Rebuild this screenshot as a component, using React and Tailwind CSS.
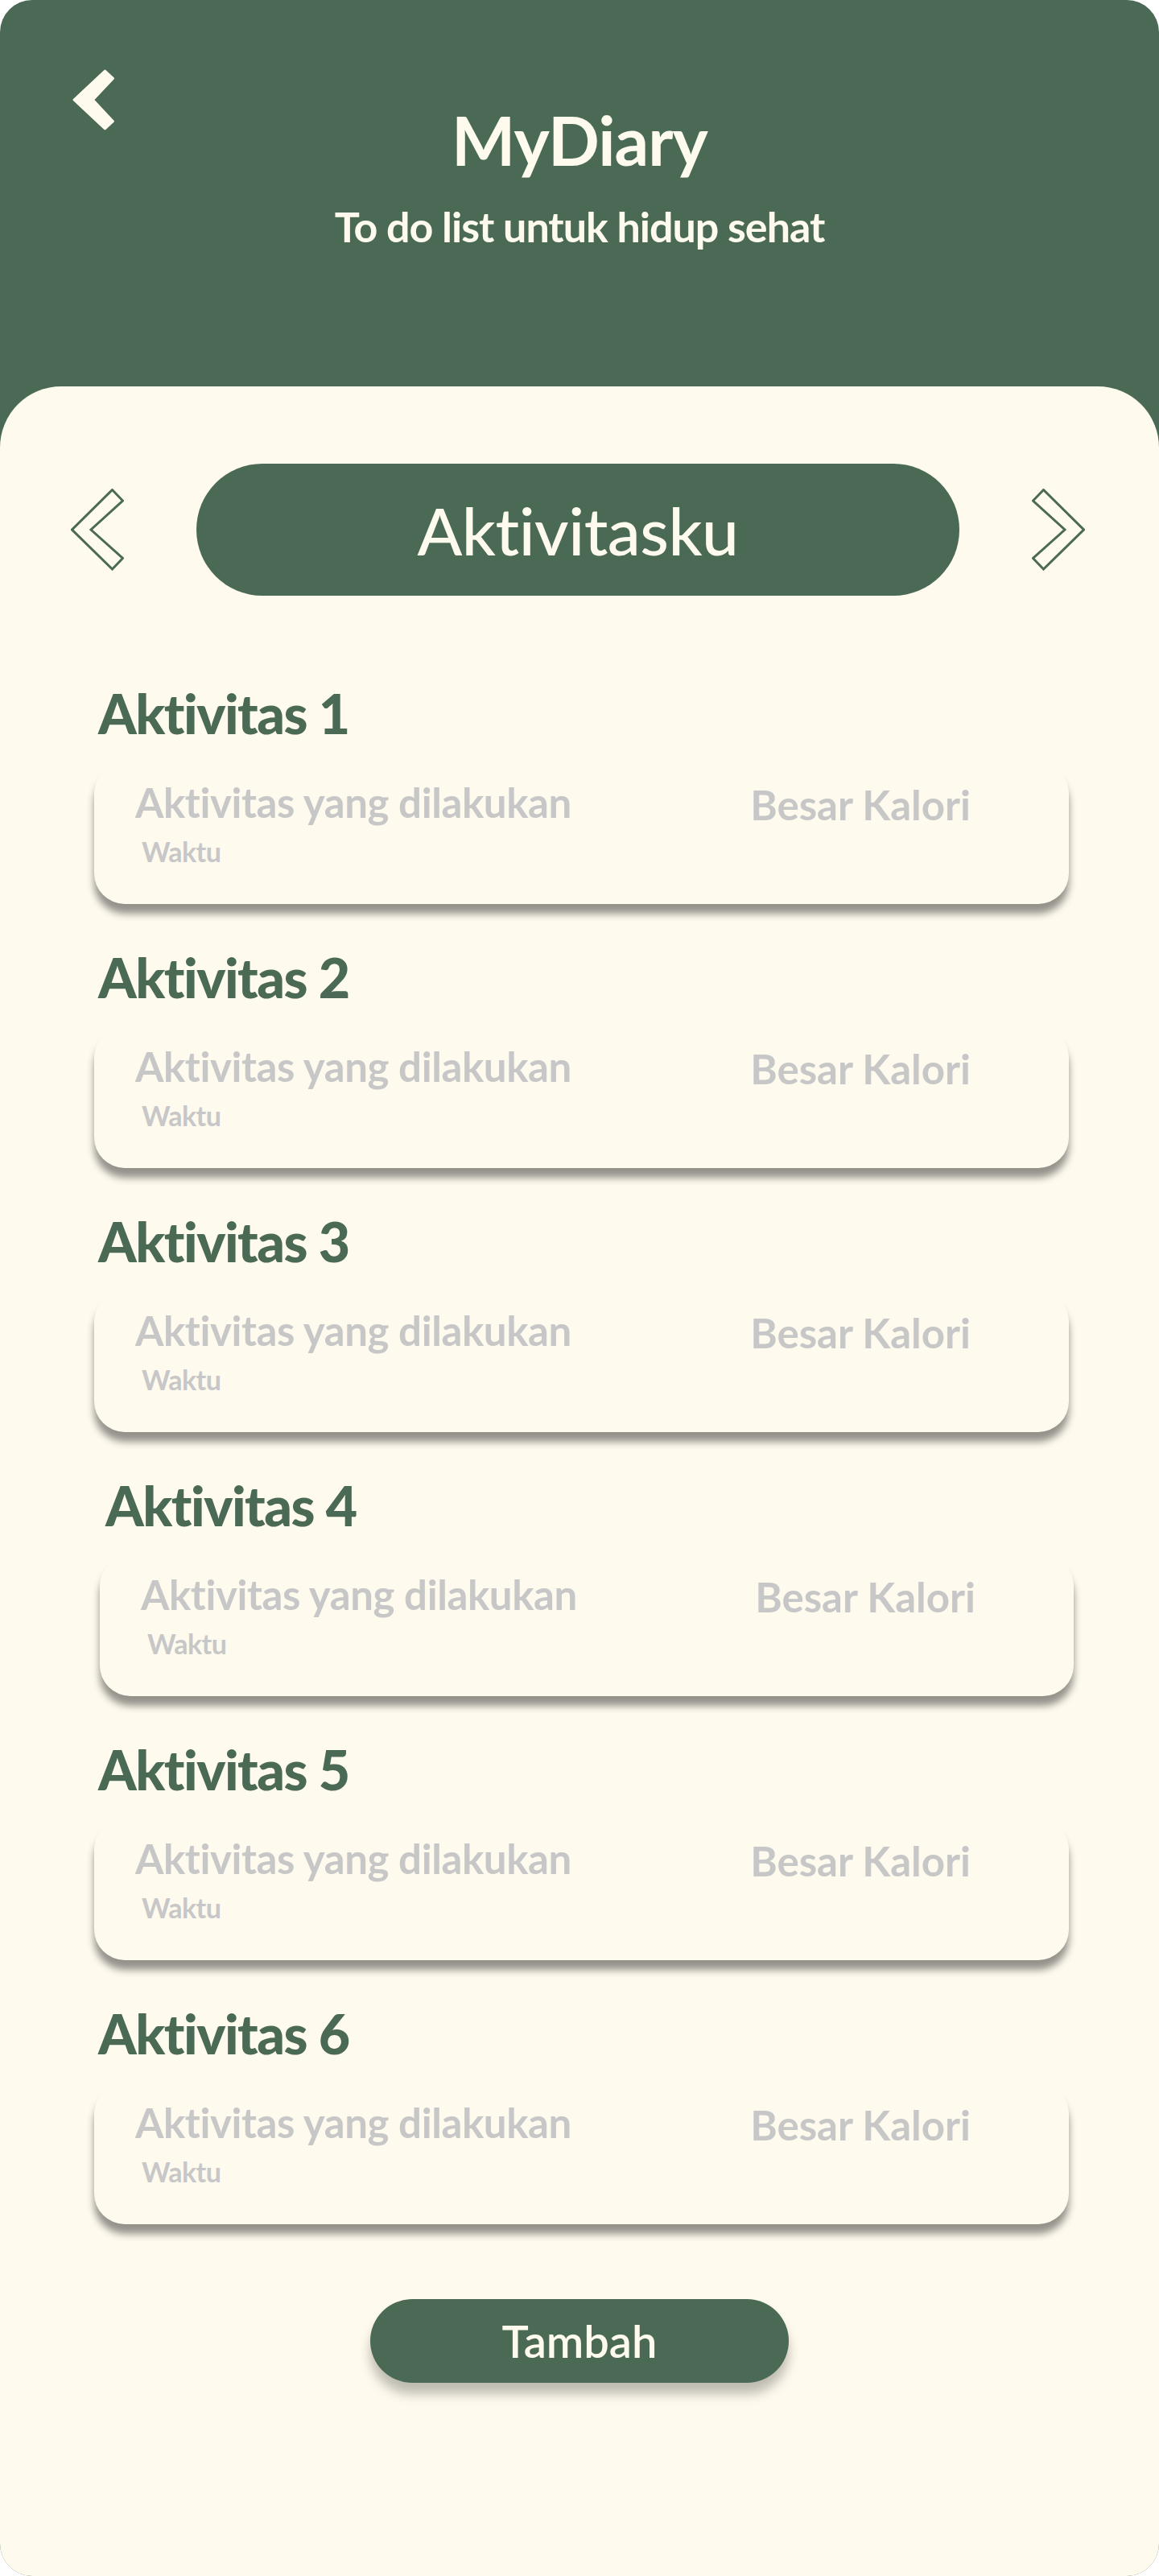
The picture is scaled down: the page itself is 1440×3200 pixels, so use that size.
import React from "react";

const font = { fontFamily: "Lato, 'Noto Sans', sans-serif" };

function BackIcon() {
  return (
    <svg width="52" height="76" viewBox="0 0 52 76" className="block">
      <polygon
        points="38.4,0 48.4,9.4 23.4,36 48.4,62.7 38.4,72 0,36"
        fill="#fefaee"
        stroke="#fefaee"
        strokeWidth="3"
        strokeLinejoin="round"
        transform="translate(2,2)"
      />
    </svg>
  );
}

function OutlineChevron({ right = false }) {
  return (
    <svg width="66" height="102" viewBox="0 0 66 102" className="block shrink-0">
      <g transform={right ? "translate(66,0) scale(-1,1)" : undefined}>
        <polygon
          points="51.5,1.5 64.5,15 25,51 64.5,86.5 51.5,100 1.5,51"
          fill="none"
          stroke="#4b6a55"
          strokeWidth="3"
          strokeLinejoin="miter"
        />
      </g>
    </svg>
  );
}

function Activity({ n, shift }) {
  return (
    <div className={"flex flex-col " + (shift ? "pl-[131px] pr-[106px]" : "pl-[122px] pr-[112px]")}>
      <h2 className="text-[68px] leading-none font-black text-[#4b6a55] tracking-[-1.5px]">
        Aktivitas {n}
      </h2>
      <div
        className={
          "mt-[28px] h-[175px] rounded-[38px] bg-[#fefaee] shadow-[0_12px_10px_rgba(0,0,0,0.42)] flex justify-between pt-[23px] pr-[122px] " +
          (shift ? "-ml-[7px] pl-[51px]" : "-ml-[5px] pl-[51px]")
        }
      >
        <div className="flex flex-col">
          <span className="text-[51px] leading-none font-bold text-[#c7c7c7] tracking-[-0.4px]">
            Aktivitas yang dilakukan
          </span>
          <span className="mt-[19px] ml-[8px] text-[34px] leading-none font-bold text-[#c7c7c7] tracking-[-0.5px]">
            Waktu
          </span>
        </div>
        <span className="mt-[3px] text-[51px] leading-none font-bold text-[#c7c7c7]">
          Besar Kalori
        </span>
      </div>
    </div>
  );
}

export default function App() {
  return (
    <div className="w-[1440px] min-h-[3200px] bg-white" style={font}>
      <div className="h-[3200px] rounded-[40px] bg-[#4b6a55] overflow-hidden flex flex-col">
        <header className="relative h-[480px] shrink-0 flex flex-col items-center pt-[132px]">
          <button className="absolute left-[90px] top-[86px]" aria-label="Kembali">
            <BackIcon />
          </button>
          <h1 className="text-[84px] leading-none font-bold text-[#fefaee] tracking-[-1px]">MyDiary</h1>
          <p className="mt-[39px] text-[52px] leading-none font-bold text-[#fefaee] tracking-[-1px]">
            To do list untuk hidup sehat
          </p>
        </header>
        <main className="flex-1 bg-[#fefaee] rounded-t-[76px] flex flex-col">
          <div className="mt-[96px] flex items-center gap-[90px] pl-[88px] pr-[92px]">
            <OutlineChevron />
            <div className="flex-1 h-[164px] rounded-full bg-[#4b6a55] flex items-center justify-center">
              <span className="text-[82px] leading-none font-medium text-[#fefaee] tracking-[-0.5px]">
                Aktivitasku
              </span>
            </div>
            <OutlineChevron right />
          </div>
          <div className="mt-[112px] flex flex-col gap-[57px]">
            {[1, 2, 3, 4, 5, 6].map((n) => (
              <Activity key={n} n={n} shift={n === 4} />
            ))}
          </div>
          <div className="mt-[93px] flex justify-center">
            <button className="w-[520px] h-[104px] rounded-full bg-[#4b6a55] shadow-[0_14px_14px_rgba(0,0,0,0.25)] flex items-center justify-center">
              <span className="text-[56px] leading-none font-semibold text-[#fefaee]">Tambah</span>
            </button>
          </div>
        </main>
      </div>
    </div>
  );
}
